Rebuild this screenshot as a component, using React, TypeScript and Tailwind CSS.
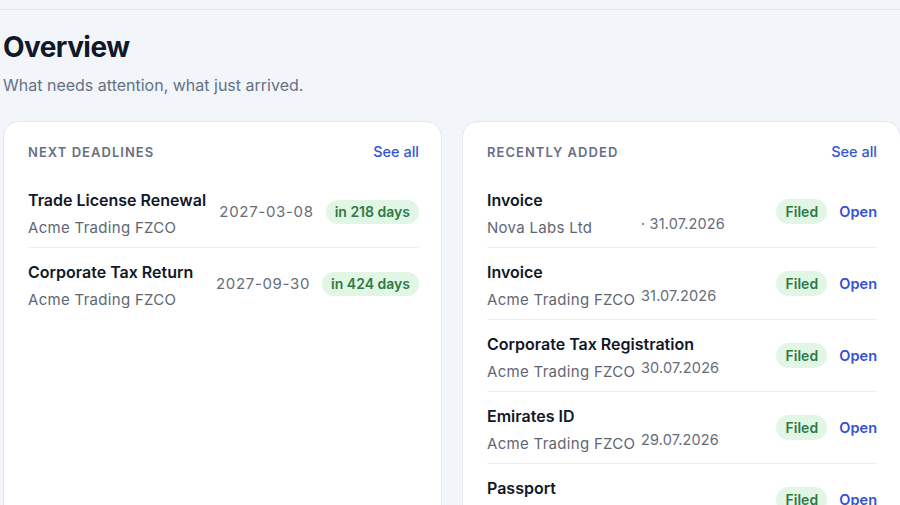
import React from "react";

const deadlines = [
  { title: "Trade License Renewal", org: "Acme Trading FZCO", date: "2027-03-08", badge: "in 218 days" },
  { title: "Corporate Tax Return", org: "Acme Trading FZCO", date: "2027-09-30", badge: "in 424 days" },
];

const recent = [
  { title: "Invoice", org: "Nova Labs Ltd", date: "· 31.07.2026" },
  { title: "Invoice", org: "Acme Trading FZCO", date: "31.07.2026" },
  { title: "Corporate Tax Registration", org: "Acme Trading FZCO", date: "30.07.2026" },
  { title: "Emirates ID", org: "Acme Trading FZCO", date: "29.07.2026" },
  { title: "Passport", org: "Acme Trading FZCO", date: "28.07.2026" },
];

function CardHeader({ label }: { label: string }) {
  return (
    <div className="flex items-center justify-between h-5">
      <span className="text-[13px] font-semibold tracking-[0.08em] text-[#667085] uppercase leading-5">{label}</span>
      <span className="text-[14.5px] font-medium text-[#3656d4] leading-5">See all</span>
    </div>
  );
}

export default function App() {
  return (
    <div
      className="w-[900px] h-[505px] overflow-hidden bg-[#f2f5f9] text-[#111827]"
      style={{ fontFamily: "Inter, 'Noto Sans', sans-serif" }}
    >
      <div className="h-[10px] border-b border-[#e3e7ed]" />
      <div className="pl-[3px]">
        <h1 className="mt-[19px] text-[28px] leading-[36px] font-bold text-[#111827] tracking-[-0.02em]">Overview</h1>
        <p className="mt-[8px] text-[16px] leading-6 text-[#667085]">What needs attention, what just arrived.</p>
        <div className="mt-[24px] grid grid-cols-[439px_439px] gap-5">
          <div className="bg-white rounded-2xl border border-[#e4e8ee] pl-6 pr-[22px] pt-[20px] h-[420px]">
            <CardHeader label="Next deadlines" />
            <div className="mt-[14px]">
              {deadlines.map((d, i) => (
                <div
                  key={i}
                  className={`flex items-start pt-[14px] pb-[9px] ${i < deadlines.length - 1 ? "border-b border-[#eceef2]" : ""}`}
                >
                  <div className="flex-1 min-w-0">
                    <div className="text-[16px] leading-5 font-semibold text-[#111827]">{d.title}</div>
                    <div className="mt-[8px] text-[15px] leading-5 tracking-[0.02em] text-[#5f6673]">{d.org}</div>
                  </div>
                  <div className="mt-[10px] flex items-center">
                    <span className="text-[15px] tracking-[0.045em] text-[#666d78] mr-[12px] leading-[24px]">{d.date}</span>
                    <span className="h-[24px] px-[9px] rounded-full bg-[#e1f6e5] text-[#2f7a45] text-[14px] font-semibold leading-[24px]">
                      {d.badge}
                    </span>
                  </div>
                </div>
              ))}
            </div>
          </div>
          <div className="bg-white rounded-2xl border border-[#e4e8ee] pl-6 pr-[23px] pt-[20px] h-[420px]">
            <CardHeader label="Recently added" />
            <div className="mt-[14px]">
              {recent.map((r, i) => (
                <div key={i} className="flex items-start pt-[14px] pb-[5px] border-b border-[#eceef2]">
                  <div className="flex-1 min-w-0">
                    <div className="text-[16px] leading-5 font-semibold text-[#111827]">{r.title}</div>
                    <div className="mt-[4px] flex items-start">
                      <span className="min-w-[154px] text-[15px] leading-[28px] tracking-[0.02em] text-[#5f6673]">{r.org}</span>
                      <span className="text-[14.5px] leading-[20px] tracking-[0.01em] text-[#666d78]">{r.date}</span>
                    </div>
                  </div>
                  <div className="mt-[9px] flex items-center">
                    <span className="h-[25px] w-[51px] text-center rounded-full bg-[#e1f6e5] text-[#2f7a45] text-[14px] font-semibold leading-[25px]">
                      Filed
                    </span>
                    <span className="ml-[12px] text-[14.5px] font-semibold text-[#3451d6] leading-5">Open</span>
                  </div>
                </div>
              ))}
            </div>
          </div>
        </div>
      </div>
    </div>
  );
}
